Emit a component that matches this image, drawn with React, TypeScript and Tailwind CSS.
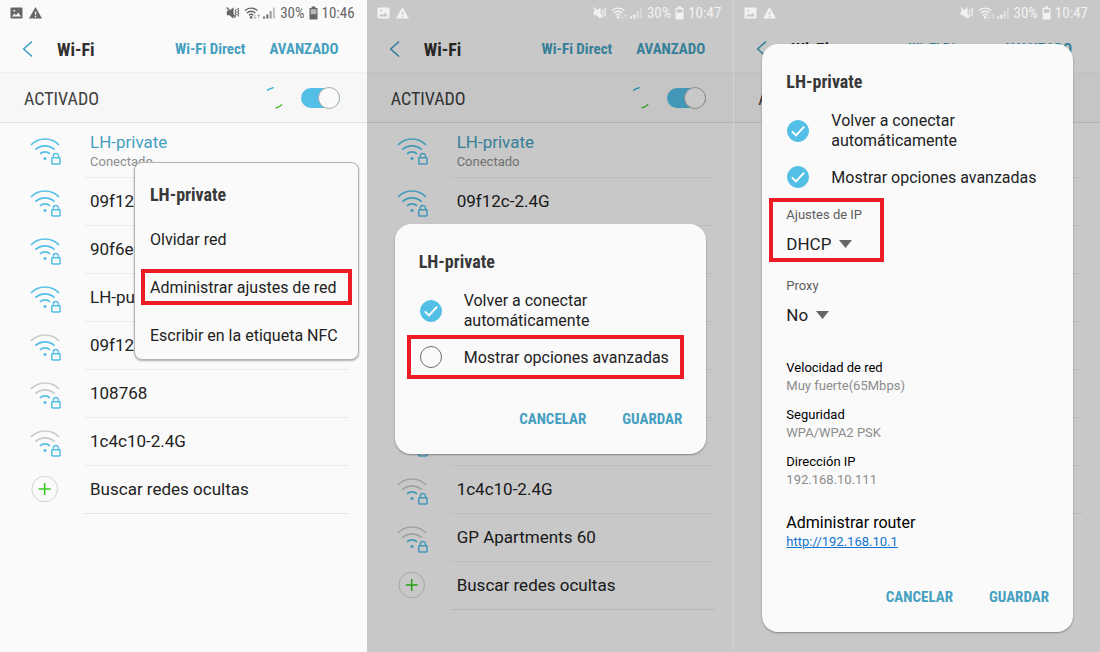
import type { ReactNode } from "react";

type Network = { name: string; level: number; status?: string };

const firstNetworks: Network[] = [
  { name: "LH-private", level: 3, status: "Conectado" },
  { name: "09f12c-2.4G", level: 3 },
  { name: "90f6e4-2.4G", level: 3 },
  { name: "LH-public", level: 3 },
  { name: "09f12c-5G", level: 2 },
  { name: "108768", level: 1 },
  { name: "1c4c10-2.4G", level: 1 },
];

const secondNetworks: Network[] = [
  ...firstNetworks.slice(0, 6),
  { name: "90f6e4-5G", level: 1 },
  { name: "1c4c10-2.4G", level: 1 },
  { name: "GP Apartments 60", level: 1 },
];

const condensed = "font-['Roboto_Condensed','Liberation_Sans_Narrow',Roboto,sans-serif]";

function WifiLockIcon({ level }: { level: number }) {
  const on = "#54bfe6";
  const off = "#cacaca";
  return (
    <svg viewBox="0 0 32 28" className="mt-[3px] h-7 w-8 shrink-0" fill="none" stroke={on} strokeWidth="1.7" aria-hidden="true">
      <path d="M1 7A19.3 19.3 0 0 1 29 7" stroke={level > 2 ? on : off} />
      <path d="M5.4 11.6A14 14 0 0 1 24.6 11.6" stroke={level > 1 ? on : off} />
      <path d="M10 15.8A7.2 7.2 0 0 1 20 15.8" />
      <circle cx="15" cy="20.4" r="1.5" fill={on} stroke="none" />
      <rect x="21.8" y="19.7" width="8.2" height="6.2" rx="0.4" strokeWidth="1.5" />
      <path d="M23.3 19.5v-1.400a2.600 2.600 0 0 1 5.200 0v1.400" strokeWidth="1.4" />
    </svg>
  );
}

function StatusBar({ time, light }: { time: string; light?: boolean }) {
  return (
    <div
      className={`relative z-20 flex h-[25px] shrink-0 items-center justify-between pt-px pr-3 pl-[10px] text-[15px] ${condensed} ${
        light ? "text-[#f2f2f2]" : "text-[#666666]"
      }`}
    >
      <div className="flex items-center gap-[6px]">
        <svg viewBox="0 0 13 12" className="h-3 w-[13px]" aria-hidden="true">
          <path
            fill="currentColor"
            fillRule="evenodd"
            d="M1.500.5h10a1 1 0 0 1 1 1v9a1 1 0 0 1-1 1h-10a1 1 0 0 1-1-1v-9a1 1 0 0 1 1-1ZM2 9.500h9L8.200 5.600 6 8.200 4.400 6.600ZM3.400 3v1.600h1.700V3Z"
          />
        </svg>
        <svg viewBox="0 0 13 12" className="h-3 w-[13px]" aria-hidden="true">
          <path fill="currentColor" fillRule="evenodd" d="M6.500 0 13 11.600H0ZM5.900 4.400v3.400h1.300V4.400ZM5.900 8.800v1.400h1.300V8.800Z" />
        </svg>
      </div>
      <div className="flex items-center">
        <svg viewBox="0 0 14 14" className="mr-1 h-[14px] w-[14px]" aria-hidden="true">
          <path fill="currentColor" d="M.8 4.800h2.600L7.600 1.300v11.400L3.400 9.200H.8Z" />
          <path d="M.8 1.600 9.600 11.600" stroke="currentColor" strokeWidth="1.500" />
          <path
            d="M10.200 3.200l-.9 1.300.9 1.300-.9 1.300.9 1.300-.9 1.300M12.700 2l-.9 1.400.9 1.400-.9 1.400.9 1.400-.9 1.400.9 1.400"
            fill="none"
            stroke="currentColor"
            strokeWidth="1.100"
          />
        </svg>
        <svg viewBox="0 0 17 14" className="mr-[2px] h-[14px] w-[17px]" fill="none" stroke="currentColor" aria-hidden="true">
          <path d="M.9 4.600A9 9 0 0 1 13.300 4.600M2.900 7A6 6 0 0 1 11.300 7M4.900 9.300A3.200 3.200 0 0 1 9.300 9.300" strokeWidth="1.400" />
          <circle cx="7.1" cy="11.4" r="1.300" fill="currentColor" stroke="none" />
          <path d="M11 8.500v4M9.700 11.300l1.300 1.400 1.300-1.400M14.600 12.500v-4M13.300 9.900l1.300-1.400 1.300 1.400" strokeWidth="0.9" opacity="0.5" />
        </svg>
        <svg viewBox="0 0 12 14" className="mr-[5px] h-[14px] w-3" fill="currentColor" aria-hidden="true">
          <path d="M0 10.500h2v2H0zM3.300 8.400h2v4.100h-2z" />
          <path d="M6.600 5h2v7.500h-2z" opacity="0.65" />
          <path d="M9.900 1.600h2v10.900h-2z" opacity="0.4" />
        </svg>
        <span className="mr-1">30%</span>
        <svg viewBox="0 0 9 14" className="mr-1 h-[14px] w-[9px]" aria-hidden="true">
          <path fill="currentColor" d="M2.600.5h3.800v1.400H8.500v11.600H.5V1.900h2.100Z" />
          <path fill="#fff" fillOpacity={light ? 0 : 0.55} d="M1.700 3.200h5.600v5H1.700Z" />
          {light && <path fill="#c8c8c8" d="M1.700 3.200h5.600v3.600H1.700Z" />}
        </svg>
        <span>{time}</span>
      </div>
    </div>
  );
}

function WifiScreen({
  id,
  time,
  networks,
  dimmed,
  edge,
  children,
}: {
  id: string;
  time: string;
  networks: Network[];
  dimmed?: boolean;
  edge?: boolean;
  children: ReactNode;
}) {
  return (
    <section
      className={`relative flex min-h-screen flex-col overflow-hidden bg-[#fafafa] ${edge ? "border-l border-[#d2d2d2]" : ""}`}
    >
      <StatusBar time={time} light={dimmed} />
      <header className={`flex h-12 shrink-0 items-center border-b border-[#f1f1f1] pt-px pr-7 pl-[22px] ${condensed}`}>
        <button type="button" aria-label="Atrás" className="mr-6">
          <svg viewBox="0 0 11 16" className="h-4 w-[11px]" fill="none" stroke="#3d9cc0" strokeWidth="1.500" aria-hidden="true">
            <path d="M10 .5 1.700 8l8.300 7.500" />
          </svg>
        </button>
        <h1 className="flex-1 text-[18px] font-bold text-[#303030]">Wi-Fi</h1>
        <button type="button" className="mr-6 text-[15px] font-bold text-[#459fc0]">Wi-Fi Direct</button>
        <button type="button" className="text-[15px] font-bold text-[#459fc0]">AVANZADO</button>
      </header>
      <div className="flex h-[50px] shrink-0 items-center border-b border-[#e0e0e0] bg-[#f7f7f7] pr-[27px] pl-6">
        <label htmlFor={id} className={`flex-1 pt-px text-[18px] text-[#404040] ${condensed}`}>ACTIVADO</label>
        <svg viewBox="0 0 20 24" className="mr-4 h-6 w-5" fill="none" strokeWidth="1.300" aria-hidden="true">
          <path d="M2.200 4.600Q4.600 2.400 8.600 1.600" stroke="#12a5dc" />
          <path d="M10.600 22Q14.400 21.300 17.200 18.400" stroke="#3cb521" />
        </svg>
        <input
          id={id}
          type="checkbox"
          role="switch"
          defaultChecked
          className="flex h-5 w-[39px] appearance-none items-center justify-end rounded-full bg-[#54bfe6] before:size-[22px] before:shrink-0 before:rounded-full before:border before:border-[#b0b0b0] before:bg-[#fafafa]"
        />
      </div>
      <ul className="text-[17px] text-[#222222]">
        {networks.map((network) => (
          <li key={network.name} className={`flex items-center pr-[18px] pl-[30px] ${network.status ? "h-[55px]" : "h-12"}`}>
            <WifiLockIcon level={network.level} />
            <div className="ml-[22px] flex h-full flex-1 flex-col justify-center border-b border-[#ececec] pl-[6px]">
              <span className={network.status ? "pt-[2px] leading-[22px] text-[#459fc0]" : ""}>{network.name}</span>
              {network.status && <span className="text-[13px] leading-[18px] text-[#8c8c8c]">{network.status}</span>}
            </div>
          </li>
        ))}
        <li className="flex h-12 items-center pr-[18px] pl-[30px]">
          <svg viewBox="0 0 32 28" className="h-7 w-8 shrink-0" fill="none" aria-hidden="true">
            <circle cx="14.700" cy="13" r="12.800" stroke="#d2d2d2" />
            <path d="M8.700 13h12M14.700 7v12" stroke="#32c81e" strokeWidth="1.500" />
          </svg>
          <button type="button" className="ml-[22px] h-full flex-1 border-b border-[#e6e6e6] pl-[6px] text-left">
            Buscar redes ocultas
          </button>
        </li>
      </ul>
      {dimmed && <div className="absolute inset-0 z-10 bg-black/20" />}
      {children}
    </section>
  );
}

function Option({ children, checked, highlighted }: { children: ReactNode; checked?: boolean; highlighted?: boolean }) {
  return (
    <label
      className={`mr-[22px] ml-3 flex min-h-11 items-center border-4 pl-[9px] text-[16px] leading-5 text-[#222222] ${
        highlighted ? "border-[#ed1c24]" : "border-transparent"
      }`}
    >
      <span className="mr-[22px] grid shrink-0 place-items-center">
        <input
          type="checkbox"
          defaultChecked={checked}
          className="peer col-start-1 row-start-1 size-[22px] appearance-none rounded-full border border-[#707070] checked:border-[#54bfe6] checked:bg-[#54bfe6]"
        />
        <svg
          viewBox="0 0 22 22"
          className="pointer-events-none col-start-1 row-start-1 size-[22px] opacity-0 peer-checked:opacity-100"
          fill="none"
          stroke="#fff"
          strokeWidth="2"
          aria-hidden="true"
        >
          <path d="M4.800 11.400 9 15.400 17.200 6.600" />
        </svg>
      </span>
      <span className="pt-px">{children}</span>
    </label>
  );
}

function Dialog({ top, children }: { top: string; children: ReactNode }) {
  return (
    <form
      aria-label="LH-private"
      className={`absolute right-[27px] left-7 z-30 rounded-[16px] bg-[#fafafa] pt-6 pb-[15px] shadow-[0_1px_2px_rgba(0,0,0,0.35)] ${top}`}
    >
      <h2 className={`px-6 text-[18px] leading-7 font-bold text-[#383838] ${condensed}`}>LH-private</h2>
      <div className="mt-[10px]">{children}</div>
      <div className={`mt-5 flex justify-end gap-9 px-6 text-[15px] font-bold text-[#459fc0] ${condensed}`}>
        <button type="button" className="h-10 pt-px">CANCELAR</button>
        <button type="button" className="h-10 pt-px">GUARDAR</button>
      </div>
    </form>
  );
}

function Picker({ id, label, value, highlighted }: { id: string; label: string; value: string; highlighted?: boolean }) {
  return (
    <div
      className={`-mt-px ml-[7px] flex h-16 w-[115px] flex-col justify-between border-4 px-[13px] py-[2px] ${
        highlighted ? "border-[#ed1c24]" : "border-transparent"
      }`}
    >
      <label htmlFor={id} className="pt-[2px] text-[13px] leading-[18px] whitespace-nowrap text-[#5c5c5c]">{label}</label>
      <div className="flex items-center gap-2">
        <select id={id} className="field-sizing-content h-6 appearance-none text-[17px] leading-6 text-[#222222]">
          <option>{value}</option>
        </select>
        <svg viewBox="0 0 13 8" className="h-2 w-[13px] shrink-0" fill="#666666" aria-hidden="true">
          <path d="M0 0h13L6.500 8Z" />
        </svg>
      </div>
    </div>
  );
}

const details = [
  { term: "Velocidad de red", value: "Muy fuerte(65Mbps)" },
  { term: "Seguridad", value: "WPA/WPA2 PSK" },
  { term: "Dirección IP", value: "192.168.10.111" },
];

export default function App() {
  return (
    <main className="grid min-h-screen grid-cols-3 bg-[#fafafa] font-[Roboto,sans-serif]">
      <WifiScreen id="wifi-1" time="10:46" networks={firstNetworks}>
        <div className="absolute top-[162px] right-2 left-[134px] z-30 rounded-lg border border-[#b4b4b4] bg-[#fafafa] shadow-[0_1px_2px_rgba(0,0,0,0.3)]">
          <h2 className={`px-[15px] pt-3 text-[18px] leading-10 font-bold text-[#383838] ${condensed}`}>LH-private</h2>
          <ul className="text-[16px] text-[#222222]">
            <li className="flex h-12 items-center px-[6px]">
              <button type="button" className="border-4 border-transparent px-[5px] pt-px whitespace-nowrap">Olvidar red</button>
            </li>
            <li className="flex h-12 items-center px-[6px]">
              <button type="button" className="h-9 w-full border-4 border-[#ed1c24] px-[5px] pt-px text-left whitespace-nowrap">
                Administrar ajustes de red
              </button>
            </li>
            <li className="flex h-12 items-center px-[6px]">
              <button type="button" className="border-4 border-transparent px-[5px] pt-px whitespace-nowrap">
                Escribir en la etiqueta NFC
              </button>
            </li>
          </ul>
        </div>
      </WifiScreen>

      <WifiScreen id="wifi-2" time="10:47" networks={secondNetworks} dimmed>
        <Dialog top="top-[224px]">
          <Option checked>
            Volver a conectar
            <br />
            automáticamente
          </Option>
          <Option highlighted>Mostrar opciones avanzadas</Option>
        </Dialog>
      </WifiScreen>

      <WifiScreen id="wifi-3" time="10:47" networks={firstNetworks} dimmed edge>
        <Dialog top="top-11">
          <Option checked>
            Volver a conectar
            <br />
            automáticamente
          </Option>
          <Option checked>Mostrar opciones avanzadas</Option>
          <Picker id="ip-settings" label="Ajustes de IP" value="DHCP" highlighted />
          <div className="mt-2">
            <Picker id="proxy" label="Proxy" value="No" />
          </div>
          <dl className="mt-[26px] flex flex-col gap-[11px] px-6 text-[13px] leading-[18px]">
            {details.map((detail) => (
              <div key={detail.term}>
                <dt className="text-black">{detail.term}</dt>
                <dd className="text-[#8c8c8c]">{detail.value}</dd>
              </div>
            ))}
          </dl>
          <div className="mt-6 px-6 pb-[6px]">
            <h3 className="text-[16px] leading-5 text-black">Administrar router</h3>
            <a href="http://192.168.10.1" className="block text-[13px] leading-[18px] text-[#1273cf] underline">
              http://192.168.10.1
            </a>
          </div>
        </Dialog>
      </WifiScreen>
    </main>
  );
}
